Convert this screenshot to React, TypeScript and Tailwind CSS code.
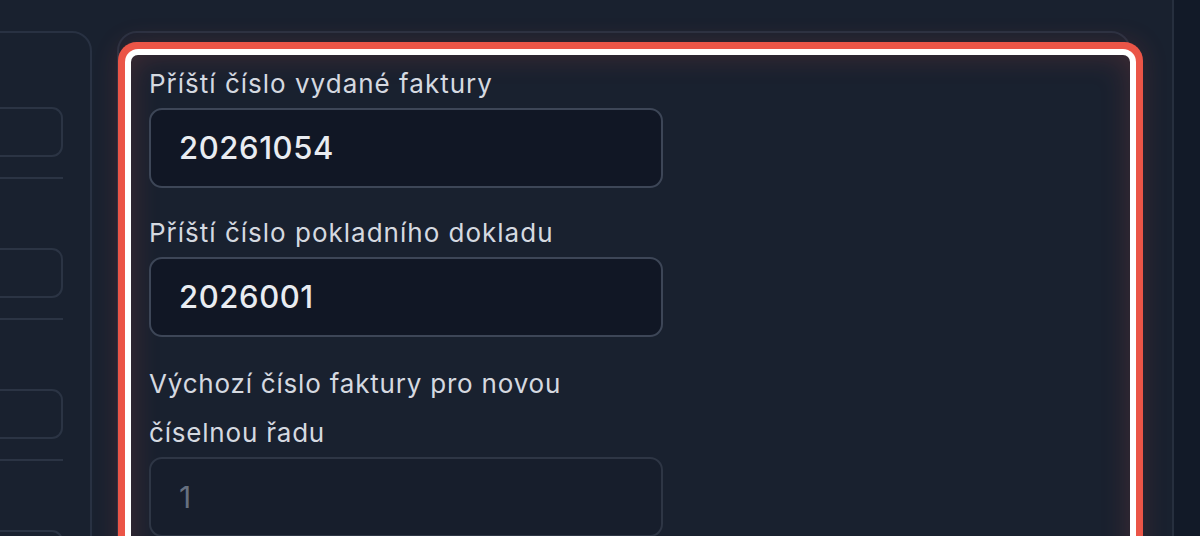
import React from 'react';

const font = { fontFamily: 'Inter, "Noto Sans", sans-serif' };

interface FieldProps {
    label: string[];
    value: string;
    disabled?: boolean;
    className?: string;
}

const Field: React.FC<FieldProps> = ({ label, value, disabled, className }) => (
    <div className={'flex flex-col ' + (className ?? '')}>
        <label
            className={
                label.length > 1
                    ? 'text-[26px] leading-[49px] tracking-[0.8px] text-[#d5d9e0] pl-[18px]'
                    : 'text-[26px] leading-[49px] tracking-[1px] text-[#d5d9e0] pl-[18px]'
            }
        >
            {label.map((line, i) => (
                <span key={i} className="block">{line}</span>
            ))}
        </label>
        <div
            className={
                disabled
                    ? 'ml-[18px] w-[514px] h-[80px] rounded-[13px] border-2 border-[#2e3645] bg-[#171e2c] flex items-center px-[28px]'
                    : 'ml-[18px] w-[514px] h-[80px] rounded-[13px] border-2 border-[#3d4657] bg-[#111725] flex items-center px-[28px]'
            }
        >
            <span className={disabled ? 'text-[30px] text-[#667080]' : 'text-[31px] tracking-[0.6px] font-medium text-[#e9ecf1]'}>
                {value}
            </span>
        </div>
    </div>
);

const SideRow: React.FC = () => (
    <div className="flex flex-col">
        <div className="h-[50px] rounded-[11px] border-2 border-[#2b3444] bg-[#19212f]" />
        <div className="mt-[20px] h-[2px] bg-[#2b3444]" />
    </div>
);

export default function App() {
    return (
        <div style={font} className="w-[1200px] h-[536px] overflow-hidden bg-[#19212f] flex">
            {/* left panel, mostly off screen */}
            <div className="shrink-0 -ml-[300px] w-[392px] pt-[31px]">
                <div className="h-[600px] rounded-tr-[20px] border-2 border-[#283142] pl-[40px] pr-[27px] pt-[74px] flex flex-col gap-[69px]">
                    <SideRow />
                    <SideRow />
                    <SideRow />
                    <SideRow />
                </div>
            </div>

            {/* main card */}
            <div className="shrink-0 ml-[25px] w-[1012px] pt-[31px]">
                <div className="h-[600px] rounded-t-[20px] border-2 border-[#283142] pl-[12px] -mr-[2px] pt-[22px]">
                    <div className="-mr-[1px] h-[600px] rounded-[7px] bg-[#19212f] pt-[4px] shadow-[0_0_0_6px_#ffffff,0_0_0_13px_#eb5547,0_0_26px_14px_rgba(235,85,71,0.14),inset_0_0_30px_rgba(235,85,71,0.2)]">
                        <div className="flex flex-col gap-[20px]">
                            <Field label={['Příští číslo vydané faktury']} value="20261054" />
                            <Field label={['Příští číslo pokladního dokladu']} value="2026001" />
                            <Field
                                className="mt-[2px]"
                                label={['Výchozí číslo faktury pro novou', 'číselnou řadu']}
                                value="1"
                                disabled
                            />
                        </div>
                    </div>
                </div>
            </div>

            <div className="flex-1" />
            <div className="shrink-0 w-[28px] border-l-2 border-[#262f3e] bg-[#121a28]" />
        </div>
    );
}
